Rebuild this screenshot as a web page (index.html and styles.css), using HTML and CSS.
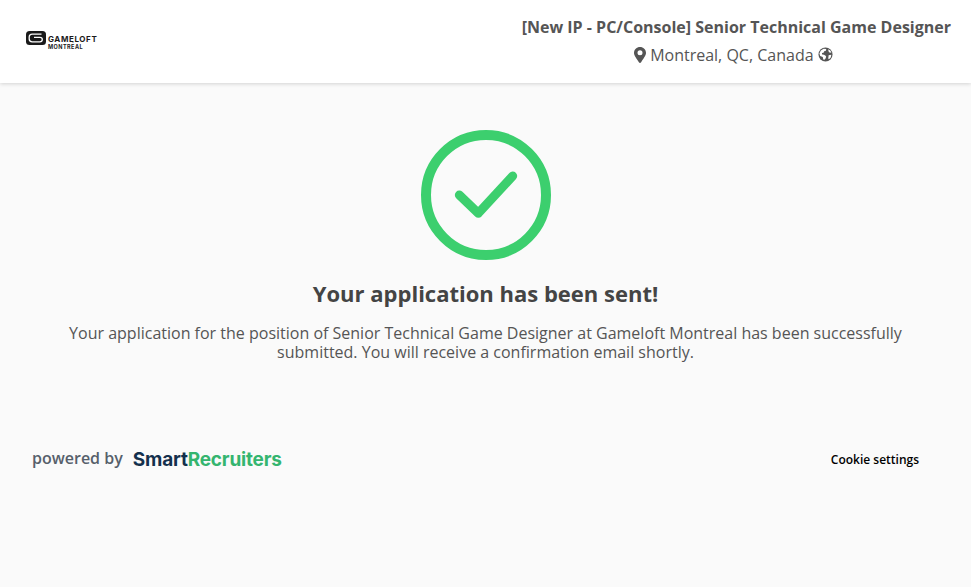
FILE: index.html
```html
<!DOCTYPE html>
<html lang="en">

<head>
  <meta charset="UTF-8">
  <title>Application sent</title>
  <link rel="stylesheet" href="styles.css">
</head>

<body>
  <header class="header">
    <div class="logo">
      <svg class="logo-mark" viewBox="0 0 20 14" width="20" height="14">
        <rect x="0" y="0" width="20" height="14" rx="3.500" fill="#1a1a1a" />
        <path d="M15.500 3.200H6.200Q3.200 3.200 3.200 6v2q0 2.800 3 2.800h7.600q2.500 0 2.500-2.300 0-2.100-2.500-2.100H8" fill="none" stroke="#fff" stroke-width="1.300" />
      </svg>
      <div class="logo-text">
        <span class="logo-name">GAMELOFT</span>
        <span class="logo-city">MONTRÉAL</span>
      </div>
    </div>
    <div class="job">
      <h1 class="job-title">[New IP - PC/Console] Senior Technical Game Designer</h1>
      <div class="job-place">
        <svg class="icon-pin" viewBox="0 0 12 16" width="12" height="16">
          <path fill-rule="evenodd" d="M6 0C2.700 0 0 2.600 0 5.800 0 8 .8 8.900 4.900 15.300c.5.800 1.700.800 2.200 0C11.200 8.900 12 8 12 5.800 12 2.600 9.300 0 6 0zm0 8.300a2.500 2.500 0 1 1 0-5 2.500 2.500 0 0 1 0 5z" fill="#555" />
        </svg>
        <span>Montreal, QC, Canada</span>
        <svg class="icon-globe" viewBox="0 0 16 16" width="15" height="15">
          <circle cx="8" cy="8" r="7.500" fill="#555" />
          <path d="M2.300 9.500L1.500 7 3 3.600 6 1.900l2.800.3-.4 1.700-1.800.6-.7 1.600-1.700.4.200 1.500 2 .3 1.700.9.600 1.300-.8 2-1.100 1.200-1.200-.5-.5-2.500zM10.800 2.400l2.300 1.400 1.200 2-1.700.3-1.300-1.300zM11.300 8.700l2.900-.5-.6 2.900-1.900 2-.8-.8.300-2.200z" fill="#fff" />
        </svg>
      </div>
    </div>
  </header>

  <main class="content">
    <svg class="check" viewBox="0 0 130 130" width="130" height="130">
      <circle cx="65" cy="65" r="60" fill="none" stroke="#3ccf6e" stroke-width="10" />
      <path d="M38.300 65L57.300 83.300 91.700 46" fill="none" stroke="#3ccf6e" stroke-width="9" stroke-linecap="round" stroke-linejoin="round" />
    </svg>
    <h2 class="sent-title">Your application has been sent!</h2>
    <p class="sent-text">Your application for the position of Senior Technical Game Designer at Gameloft Montreal has been successfully submitted. You will receive a confirmation email shortly.</p>
  </main>

  <footer class="footer">
    <div class="powered">
      <span class="powered-label">powered by</span>
      <span class="brand"><span class="brand-dark">Smart</span><span class="brand-green">Recruiters</span></span>
    </div>
    <a class="cookies" href="#">Cookie settings</a>
  </footer>
</body>

</html>
```

FILE: styles.css
```css
* {
  box-sizing: border-box;
  margin: 0;
  padding: 0;
}

body {
  background: #fafafa;
  color: #555;
  font-family: "Open Sans", sans-serif;
  font-size: 16px;
  min-height: 587px;
  overflow: hidden;
}

.header {
  height: 83px;
  background: #fff;
  box-shadow: 0 1px 4px rgba(0, 0, 0, .16);
  display: flex;
  justify-content: space-between;
  align-items: center;
  padding: 0 20px 0 26px;
}

.logo {
  display: flex;
  align-items: flex-start;
  gap: 2px;
  color: #1a1a1a;
}

.logo-mark {
  display: block;
}

.logo-text {
  display: flex;
  flex-direction: column;
  padding-top: 4px;
}

.logo-name {
  font-family: "Inter", sans-serif;
  font-size: 8px;
  font-weight: 700;
  line-height: 8px;
  letter-spacing: .6px;
}

.logo-city {
  font-family: "Inter", sans-serif;
  font-size: 5.500px;
  font-weight: 700;
  line-height: 9px;
  letter-spacing: .45px;
}

.job {
  text-align: center;
  margin-top: -2px;
}

.job-title {
  font-size: 16px;
  font-weight: 700;
  line-height: 22px;
  color: #555;
}

.job-place {
  display: flex;
  justify-content: center;
  align-items: center;
  gap: 4px;
  margin-top: 6px;
  padding-right: 6px;
  line-height: 22px;
}

.content {
  display: flex;
  flex-direction: column;
  align-items: center;
  padding: 47px 64px 0;
}

.check {
  display: block;
}

.sent-title {
  margin-top: 18px;
  font-size: 22px;
  font-weight: 700;
  line-height: 30px;
  color: #444;
}

.sent-text {
  margin-top: 16px;
  font-size: 16px;
  line-height: 19px;
  text-align: center;
}

.footer {
  display: flex;
  justify-content: space-between;
  align-items: center;
  padding: 85px 52px 0 32px;
}

.powered {
  display: flex;
  align-items: center;
  gap: 10px;
}

.powered-label {
  margin-bottom: 2px;
  font-size: 16px;
  font-weight: 600;
  color: #56606b;
}

.brand {
  margin-top: 1px;
  font-family: "Inter", sans-serif;
  font-size: 19px;
  font-weight: 700;
  letter-spacing: -.2px;
}

.brand-dark {
  color: #13304d;
}

.brand-green {
  color: #34b56f;
}

.cookies {
  margin-top: 1px;
  font-size: 12px;
  font-weight: 600;
  color: #000;
  text-decoration: none;
}
```
